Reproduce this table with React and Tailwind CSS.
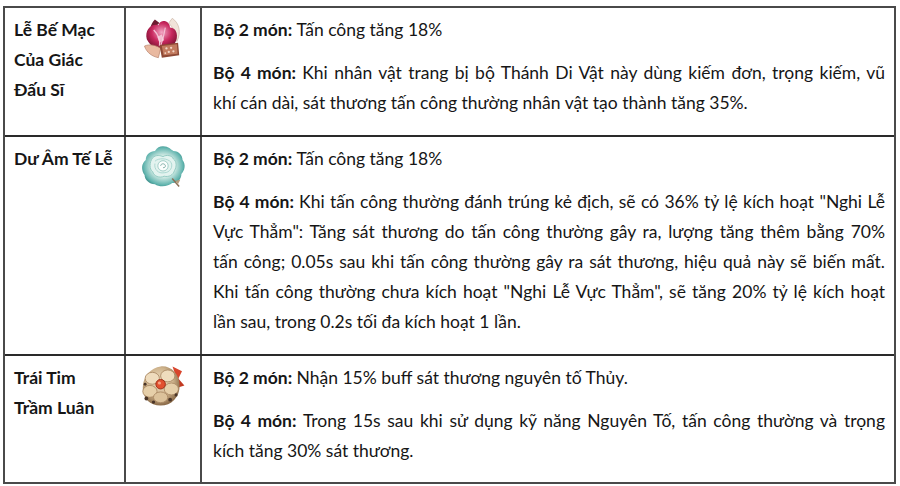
import React from "react";

function GladiatorIcon() {
  return (
    <svg width="46" height="44" viewBox="3 2 38 38">
      <defs>
        <radialGradient id="g1" cx="50%" cy="40%" r="60%">
          <stop offset="0%" stopColor="#f2a7c4" />
          <stop offset="55%" stopColor="#c8285e" />
          <stop offset="100%" stopColor="#7a1030" />
        </radialGradient>
      </defs>
      {/* pale horns */}
      <path d="M30 4 C36 8 38 16 34 24 C33 18 31 12 27 8 Z" fill="#f1e4da" stroke="#cdb5a5" strokeWidth="0.6" />
      <path d="M15 5 C11 9 10 14 12 20 C14 14 16 10 19 8 Z" fill="#6e1b30" />
      {/* petals */}
      <path d="M8 22 C6 14 12 8 18 10 C20 4 28 6 28 12 C34 12 36 20 32 26 C28 32 14 34 8 22 Z" fill="url(#g1)" />
      <path d="M14 14 C18 18 20 22 19 28" stroke="#f4c0d4" strokeWidth="1.2" fill="none" />
      <path d="M24 12 C23 18 22 22 20 28" stroke="#f4c0d4" strokeWidth="1" fill="none" />
      <path d="M17 20 L21 18 L23 23 L19 25 Z" fill="#f7d7e2" opacity="0.8" />
      {/* tan base */}
      <path d="M6 28 C10 26 16 27 20 30 L18 38 C13 37 8 34 6 28 Z" fill="#e9b9a0" stroke="#b78069" strokeWidth="0.6" />
      <path d="M19 27 L35 25 L36 36 L21 38 Z" fill="#8e4a36" />
      <path d="M21 28 L34 26.5 L34.6 34.5 L22.5 36 Z" fill="#c27b5f" />
      <circle cx="25" cy="30" r="1" fill="#f3d6c6" />
      <circle cx="29" cy="29.5" r="1" fill="#f3d6c6" />
      <circle cx="27" cy="33" r="1" fill="#f3d6c6" />
      <circle cx="31" cy="32.5" r="1" fill="#f3d6c6" />
      <circle cx="24" cy="34" r="0.8" fill="#f3d6c6" />
    </svg>
  );
}

function EchoesIcon() {
  return (
    <svg width="46" height="44" viewBox="2 2 40 38">
      <defs>
        <radialGradient id="g2" cx="50%" cy="50%" r="55%">
          <stop offset="0%" stopColor="#ffffff" />
          <stop offset="50%" stopColor="#cfe9e3" />
          <stop offset="85%" stopColor="#5fb3ad" />
          <stop offset="100%" stopColor="#2e7f7c" />
        </radialGradient>
      </defs>
      {/* outer petals */}
      <path d="M22 3 C27 3 29 6 31 7 C36 7 39 11 39 15 C42 19 41 24 38 27 C38 32 34 35 30 35 C27 38 19 39 15 36 C10 36 6 32 6 28 C3 24 3 18 7 15 C7 10 11 7 15 7 C17 4 19 3 22 3 Z" fill="url(#g2)" />
      {/* middle petals */}
      <path d="M13 13 C16 10 20 11 22 12 C25 10 30 11 31 14 C34 16 34 21 32 24 C31 28 27 30 23 29 C19 31 14 29 13 25 C10 23 10 17 13 13 Z" fill="#e3f3ef" stroke="#8fc8c0" strokeWidth="0.8" />
      <path d="M15 16 C18 13 26 13 29 17 C31 21 28 26 23 26 C18 27 14 23 15 18" fill="none" stroke="#a8d6cf" strokeWidth="0.8" />
      {/* center */}
      <circle cx="22" cy="20" r="4.5" fill="#fbfefd" stroke="#9ccbc4" strokeWidth="0.8" />
      <path d="M20 20 C20 18 23 17.5 24 19.5 C24.5 21 23 22 22 21.5" fill="none" stroke="#7aa9a2" strokeWidth="0.8" />
      {/* stem tip */}
      <path d="M30 31 L36 38" stroke="#8a7058" strokeWidth="1.3" />
      <path d="M33 33 L37 32 L35 36 Z" fill="#b59a7a" />
    </svg>
  );
}

function DepthIcon() {
  return (
    <svg width="46" height="44" viewBox="3 2 38 37">
      <defs>
        <radialGradient id="g3" cx="45%" cy="40%" r="60%">
          <stop offset="0%" stopColor="#f3e3c8" />
          <stop offset="60%" stopColor="#cfb48d" />
          <stop offset="100%" stopColor="#8a6a48" />
        </radialGradient>
      </defs>
      <path d="M30 4 L38 8 L34 16 Z" fill="#d8452c" />
      <path d="M33 12 L40 20 L34 22 Z" fill="#c23a22" />
      <path d="M20 4 C28 3 36 10 36 20 C36 30 29 37 20 37 C11 37 5 31 5 22 C5 12 12 5 20 4 Z" fill="url(#g3)" />
      <ellipse cx="13" cy="14" rx="6" ry="5" fill="#efdcbd" stroke="#a88763" strokeWidth="0.7" />
      <ellipse cx="26" cy="12" rx="6" ry="5" fill="#efdcbd" stroke="#a88763" strokeWidth="0.7" />
      <ellipse cx="29" cy="23" rx="6" ry="5" fill="#e6cfa9" stroke="#a88763" strokeWidth="0.7" />
      <ellipse cx="11" cy="25" rx="6" ry="5" fill="#e6cfa9" stroke="#a88763" strokeWidth="0.7" />
      <ellipse cx="20" cy="30" rx="6" ry="4.5" fill="#dcc29b" stroke="#a88763" strokeWidth="0.7" />
      <circle cx="20" cy="19" r="4" fill="#e2502f" stroke="#9c2c16" strokeWidth="0.8" />
      <circle cx="19" cy="18" r="1.3" fill="#f7a184" />
      <circle cx="8" cy="31" r="1.6" fill="#4a3528" />
      <circle cx="14" cy="34" r="1.4" fill="#4a3528" />
      <circle cx="28" cy="32" r="1.6" fill="#4a3528" />
      <circle cx="33" cy="28" r="1.3" fill="#4a3528" />
      <circle cx="7" cy="19" r="1.2" fill="#4a3528" />
    </svg>
  );
}

function Para({ label, lines }) {
  return (
    <div>
      {lines.map((line, i) => (
        <div
          key={i}
          className={
            i < lines.length - 1
              ? "whitespace-nowrap text-justify [text-align-last:justify]"
              : "whitespace-nowrap"
          }
        >
          {i === 0 && <span className="font-bold">{label} </span>}
          {line}
        </div>
      ))}
    </div>
  );
}

const rows = [
  {
    name: ["Lễ Bế Mạc", "Của Giác", "Đấu Sĩ"],
    Icon: GladiatorIcon,
    h: "h-[127px]",
    two: ["Tấn công tăng 18%"],
    four: [
      "Khi nhân vật trang bị bộ Thánh Di Vật này dùng kiếm đơn, trọng kiếm, vũ",
      "khí cán dài, sát thương tấn công thường nhân vật tạo thành tăng 35%.",
    ],
  },
  {
    name: ["Dư Âm Tế Lễ"],
    Icon: EchoesIcon,
    h: "h-[219px]",
    two: ["Tấn công tăng 18%"],
    four: [
      "Khi tấn công thường đánh trúng kẻ địch, sẽ có 36% tỷ lệ kích hoạt \"Nghi Lễ",
      "Vực Thẳm\": Tăng sát thương do tấn công thường gây ra, lượng tăng thêm bằng 70%",
      "tấn công; 0.05s sau khi tấn công thường gây ra sát thương, hiệu quả này sẽ biến mất.",
      "Khi tấn công thường chưa kích hoạt \"Nghi Lễ Vực Thẳm\", sẽ tăng 20% tỷ lệ kích hoạt",
      "lần sau, trong 0.2s tối đa kích hoạt 1 lần.",
    ],
  },
  {
    name: ["Trái Tim", "Trầm Luân"],
    Icon: DepthIcon,
    h: "h-[128px]",
    two: ["Nhận 15% buff sát thương nguyên tố Thủy."],
    four: [
      "Trong 15s sau khi sử dụng kỹ năng Nguyên Tố, tấn công thường và trọng",
      "kích tăng 30% sát thương.",
    ],
  },
];

export default function App() {
  return (
    <div
      className="w-[900px] h-[486px] bg-white pt-[6px] pl-[3px] text-[#161616] text-[17.5px] leading-[30px]"
      style={{ fontFamily: "Lato, 'Open Sans', sans-serif" }}
    >
      <div className="w-[893px] border-2 border-[#4a4a4a]">
        {rows.map((r, idx) => (
          <div
            key={idx}
            className={`grid grid-cols-[121px_76px_1fr] ${r.h} ${idx > 0 ? "border-t-2 border-[#2a2a2a]" : ""}`}
          >
            <div className="pl-[9px] pt-[7px] font-bold border-r-2 border-[#4a4a4a]">
              {r.name.map((n) => (
                <div key={n}>{n}</div>
              ))}
            </div>
            <div className="flex justify-center pt-[8px] border-r-2 border-[#4a4a4a]">
              <div className="w-[46px] h-[44px]">
                <r.Icon />
              </div>
            </div>
            <div className="pl-[11px] pr-[9px] pt-[7px] flex flex-col gap-[13px]">
              <Para label="Bộ 2 món:" lines={r.two} />
              <Para label="Bộ 4 món:" lines={r.four} />
            </div>
          </div>
        ))}
      </div>
    </div>
  );
}
